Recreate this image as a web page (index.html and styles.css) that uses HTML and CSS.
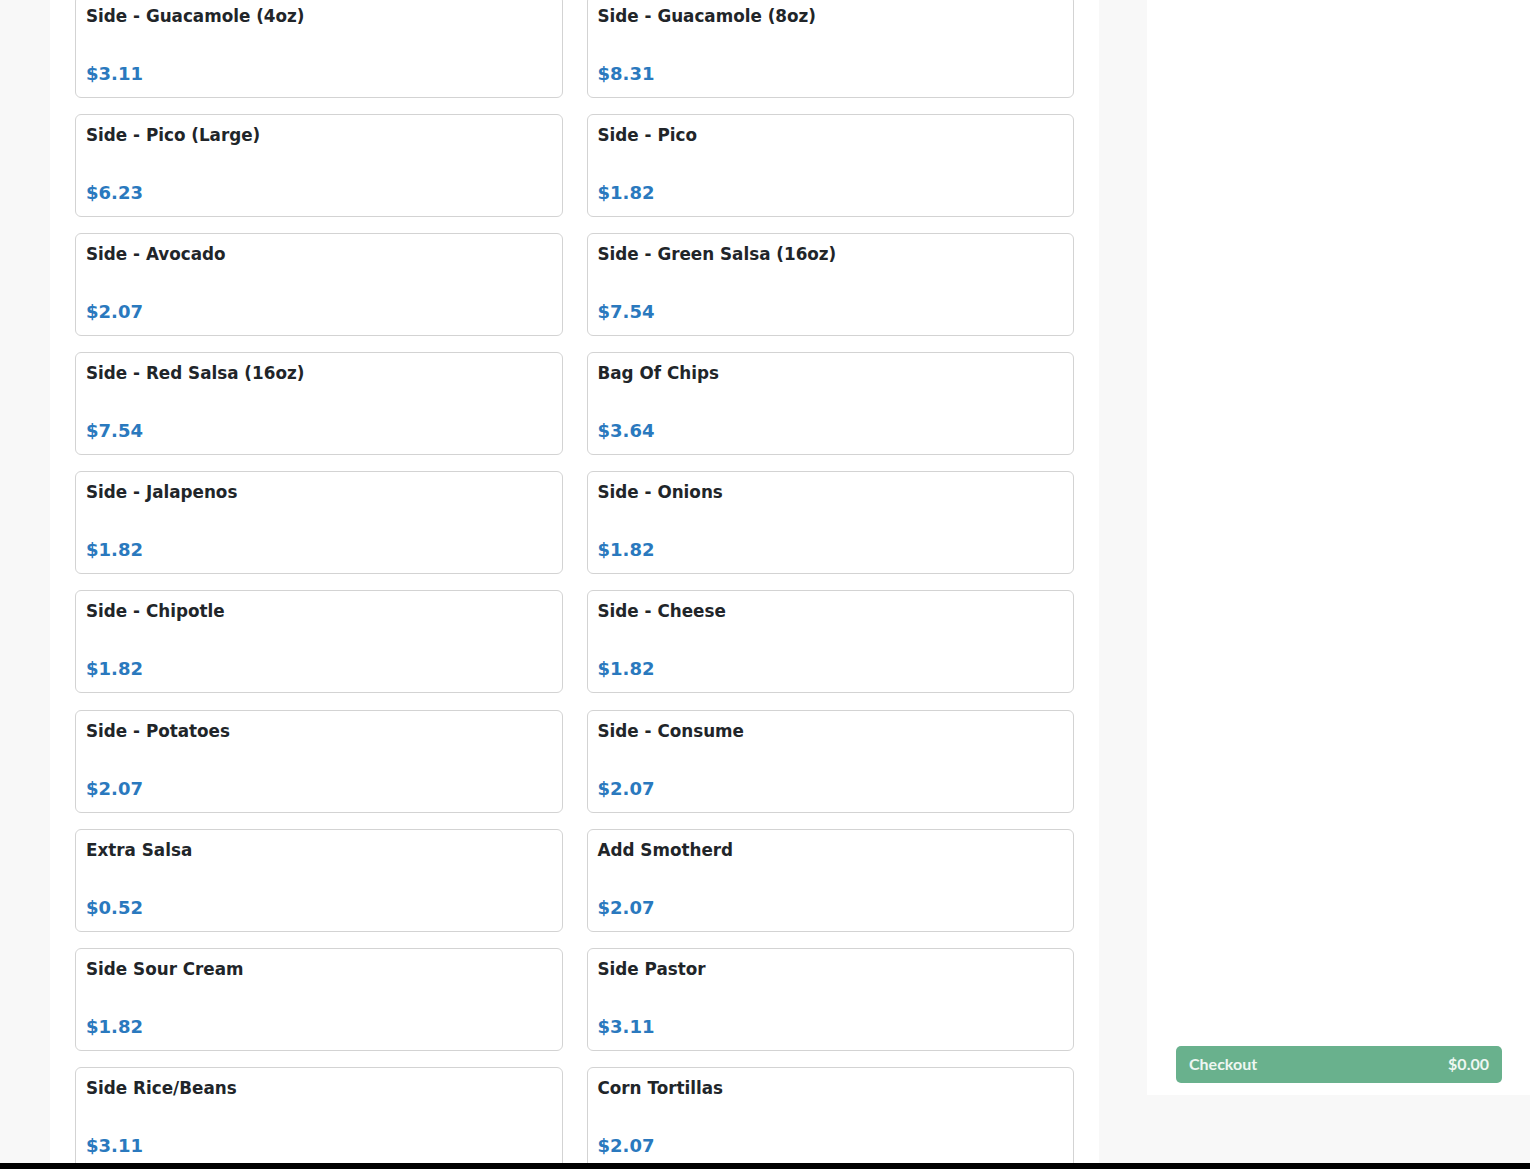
FILE: index.html
```html
<!DOCTYPE html>
<html lang="en">
<head>
<meta charset="utf-8">
<title>Menu</title>
<link rel="stylesheet" href="styles.css">
</head>
<body>
<div class="layout">
  <main class="menu">
    <div class="items">
      <div class="card"><div class="name">Side - Guacamole (4oz)</div><div class="price">$3.11</div></div>
      <div class="card"><div class="name">Side - Guacamole (8oz)</div><div class="price">$8.31</div></div>
      <div class="card"><div class="name">Side - Pico (Large)</div><div class="price">$6.23</div></div>
      <div class="card"><div class="name">Side - Pico</div><div class="price">$1.82</div></div>
      <div class="card"><div class="name">Side - Avocado</div><div class="price">$2.07</div></div>
      <div class="card"><div class="name">Side - Green Salsa (16oz)</div><div class="price">$7.54</div></div>
      <div class="card"><div class="name">Side - Red Salsa (16oz)</div><div class="price">$7.54</div></div>
      <div class="card"><div class="name">Bag Of Chips</div><div class="price">$3.64</div></div>
      <div class="card"><div class="name">Side - Jalapenos</div><div class="price">$1.82</div></div>
      <div class="card"><div class="name">Side - Onions</div><div class="price">$1.82</div></div>
      <div class="card"><div class="name">Side - Chipotle</div><div class="price">$1.82</div></div>
      <div class="card"><div class="name">Side - Cheese</div><div class="price">$1.82</div></div>
      <div class="card"><div class="name">Side - Potatoes</div><div class="price">$2.07</div></div>
      <div class="card"><div class="name">Side - Consume</div><div class="price">$2.07</div></div>
      <div class="card"><div class="name">Extra Salsa</div><div class="price">$0.52</div></div>
      <div class="card"><div class="name">Add Smotherd</div><div class="price">$2.07</div></div>
      <div class="card"><div class="name">Side Sour Cream</div><div class="price">$1.82</div></div>
      <div class="card"><div class="name">Side Pastor</div><div class="price">$3.11</div></div>
      <div class="card"><div class="name">Side Rice/Beans</div><div class="price">$3.11</div></div>
      <div class="card"><div class="name">Corn Tortillas</div><div class="price">$2.07</div></div>
    </div>
  </main>
  <aside class="cart">
    <button class="checkout"><span>Checkout</span><span>$0.00</span></button>
  </aside>
</div>
<div class="bottom-bar"></div>
</body>
</html>
```
FILE: styles.css
```css
* { box-sizing: border-box; }
html, body { margin: 0; padding: 0; }
body {
  background: #f8f8f8;
  font-family: "DejaVu Sans", sans-serif;
  color: #212529;
  height: 1169px;
  overflow: hidden;
}
.layout {
  display: flex;
  align-items: flex-start;
  padding-left: 50px;
  gap: 48px;
}
.menu {
  width: 1049px;
  background: #fff;
  padding: 0 25px;
  height: 1169px;
  overflow: hidden;
}
.items {
  display: grid;
  grid-template-columns: 1fr 1fr;
  column-gap: 24px;
  row-gap: 16.1px;
  margin-top: -5px;
}
.card {
  border: 1px solid #d3d3d3;
  border-radius: 6px;
  padding: 10px 10px 13px;
  height: 103px;
  background: #fff;
}
.name {
  font-weight: bold;
  font-size: 16.8px;
  line-height: 21px;
  margin-bottom: 36px;
  color: #212529;
}
.price {
  font-weight: bold;
  font-size: 18px;
  line-height: 21px;
  color: #2a79be;
}
.cart {
  width: 383px;
  height: 1095px;
  background: #fff;
  display: flex;
  flex-direction: column;
  justify-content: flex-end;
  padding: 0 28px 12px 29px;
}
.checkout {
  display: flex;
  justify-content: space-between;
  align-items: center;
  width: 100%;
  height: 37px;
  border: 0;
  border-radius: 5px;
  background: #69b18d;
  color: #eef7f2;
  font-family: Lato, "Open Sans", sans-serif;
  font-weight: 700;
  font-size: 16px;
  padding: 0 13px 2px 13px;
}
.bottom-bar {
  position: fixed;
  left: 0;
  right: 0;
  bottom: 0;
  height: 6px;
  background: #000;
}
```
